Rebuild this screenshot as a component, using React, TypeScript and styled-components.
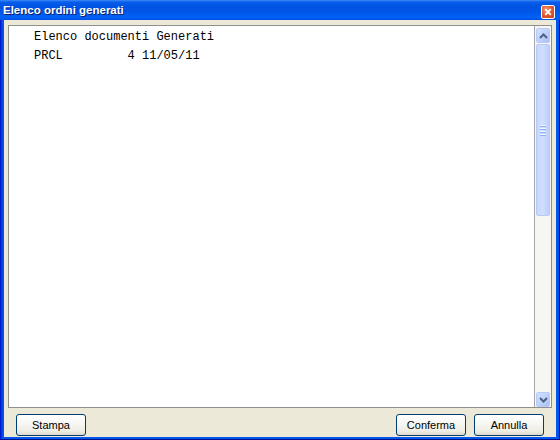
import React from "react";
import styled, { createGlobalStyle } from "styled-components";

const GlobalStyle = createGlobalStyle`
  html, body { margin: 0; padding: 0; background: #ffffff; }
  * { box-sizing: border-box; }
`;

const Window = styled.div`
  width: 560px;
  height: 440px;
  display: flex;
  flex-direction: column;
  background: linear-gradient(to right, #0831D9 0px, #0055EA 2px, #0055EA 557px, #0831D9 560px);
  border-left: 1px solid #0019CF;
  border-right: 1px solid #00138C;
  border-bottom: 1px solid #00138C;
`;

const TitleBar = styled.div`
  height: 20px;
  margin: 0 -1px;
  display: flex;
  align-items: center;
  padding: 0 5px 0 3px;
  background: linear-gradient(
    to bottom,
    #3D8CF7 0px,
    #0A5DEA 2px,
    #0054E3 6px,
    #0055E8 12px,
    #0062F7 17px,
    #005AEF 19px,
    #0049D9 20px
  );
`;

const Title = styled.span`
  font-family: "Liberation Sans", Arial, sans-serif;
  font-weight: bold;
  font-size: 11.5px;
  color: #ffffff;
  text-shadow: 1px 1px 0 #0A1E6B;
  white-space: nowrap;
`;

const CloseButton = styled.div`
  margin-left: auto;
  margin-top: 3px;
  width: 14px;
  height: 14px;
  border: 1px solid #ffffff;
  border-radius: 2px;
  background: radial-gradient(circle at 35% 30%, #F59A7C 0%, #E35B33 45%, #C8421D 100%);
  display: flex;
  align-items: center;
  justify-content: center;
`;

const Client = styled.div`
  flex: 1;
  margin: 0 3px 2px 3px;
  background: #ECE9D8;
  display: flex;
  flex-direction: column;
  padding: 5px 4px 1px 4px;
  min-height: 0;
`;

const MemoBox = styled.div`
  flex: 1;
  display: flex;
  border: 1px solid #8E8F8F;
  background: #ffffff;
  min-height: 0;
`;

const MemoText = styled.div`
  flex: 1;
  padding: 2px 25px;
  font-family: "Liberation Mono", "Courier New", monospace;
  font-size: 12px;
  line-height: 19px;
  color: #000000;
  white-space: pre;
`;

const ScrollBar = styled.div`
  width: 17px;
  display: flex;
  flex-direction: column;
  border-left: 1px solid #A7A6AA;
  background: #F7F6F2;
  padding: 2px 1px 0 1px;
`;

const ScrollButton = styled.div`
  height: 15px;
  width: 14px;
  border: 1px solid #B7CBF8;
  border-radius: 2px;
  background: linear-gradient(to bottom right, #D4E0FD 0%, #BCCFFB 60%, #A9C0F5 100%);
  display: flex;
  align-items: center;
  justify-content: center;
  flex-shrink: 0;
`;

const Thumb = styled.div`
  height: 172px;
  width: 14px;
  margin-top: 1px;
  border: 1px solid #B5C9F7;
  border-radius: 2px;
  background: linear-gradient(to right, #C7D6FC 0%, #D1DEFD 45%, #BCCEFA 100%);
  display: flex;
  flex-direction: column;
  align-items: center;
  justify-content: center;
  gap: 1px;
  flex-shrink: 0;
`;

const GripLine = styled.div`
  width: 6px;
  height: 1px;
  background: #EEF3FE;
  box-shadow: 0 1px 0 #8CB0F8;
  margin-bottom: 1px;
`;

const Track = styled.div`
  flex: 1;
`;

const ButtonRow = styled.div`
  display: flex;
  align-items: center;
  gap: 8px;
  padding: 6px 8px 0 8px;
`;

const Spacer = styled.div`
  flex: 1;
`;

const Button = styled.button`
  width: 70px;
  height: 22px;
  padding: 0;
  border: 1px solid #003C74;
  border-radius: 3px;
  background: linear-gradient(to bottom, #FFFFFF 0%, #F7F7F4 40%, #EEEDE5 80%, #DCD8CC 100%);
  font-family: "Liberation Sans", Arial, sans-serif;
  font-size: 11px;
  color: #000000;
`;

const Chevron: React.FC<{ up?: boolean }> = ({ up }) => (
  <svg width="9" height="6" viewBox="0 0 9 6">
    <path
      d={up ? "M1 5 L4.5 1.5 L8 5" : "M1 1 L4.5 4.5 L8 1"}
      fill="none"
      stroke="#4D6185"
      strokeWidth="2"
    />
  </svg>
);

export default function App() {
  return (
    <>
      <GlobalStyle />
      <Window>
        <TitleBar>
          <Title>Elenco ordini generati</Title>
          <CloseButton>
            <svg width="8" height="8" viewBox="0 0 8 8">
              <path d="M1.2 1.2 L6.8 6.8 M6.8 1.2 L1.2 6.8" stroke="#ffffff" strokeWidth="1.8" />
            </svg>
          </CloseButton>
        </TitleBar>
        <Client>
          <MemoBox>
            <MemoText>{"Elenco documenti Generati\nPRCL         4 11/05/11"}</MemoText>
            <ScrollBar>
              <ScrollButton>
                <Chevron up />
              </ScrollButton>
              <Thumb>
                <GripLine />
                <GripLine />
                <GripLine />
                <GripLine />
              </Thumb>
              <Track />
              <ScrollButton>
                <Chevron />
              </ScrollButton>
            </ScrollBar>
          </MemoBox>
          <ButtonRow>
            <Button>Stampa</Button>
            <Spacer />
            <Button>Conferma</Button>
            <Button>Annulla</Button>
          </ButtonRow>
        </Client>
      </Window>
    </>
  );
}
